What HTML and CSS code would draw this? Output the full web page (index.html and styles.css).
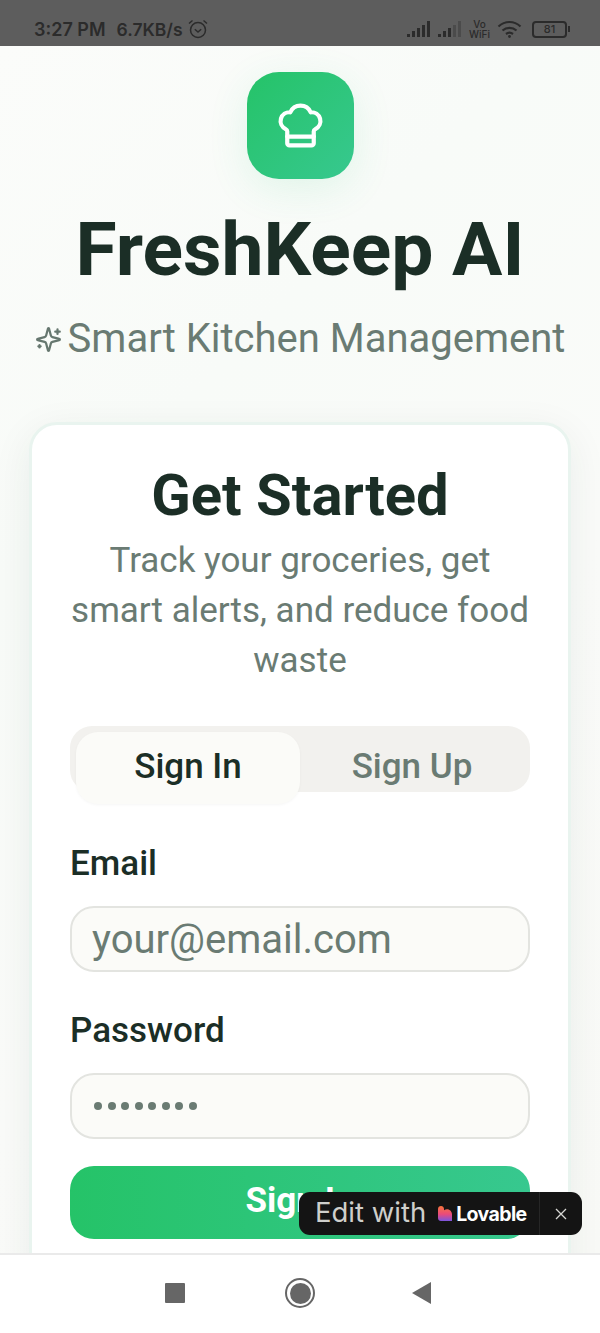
FILE: index.html
```html
<!DOCTYPE html>
<html lang="en">
<head>
	<meta charset="UTF-8">
	<title>FreshKeep AI</title>
	<link rel="stylesheet" href="styles.css">
</head>
<body>
	<div class="statusbar">
		<div class="status-left">
			<span>3:27 PM</span>
			<span class="speed">6.7KB/s</span>
			<svg class="alarm" width="20" height="20" viewBox="0 0 20 20" fill="none" stroke="#2b2b2b" stroke-width="1.5">
				<circle cx="10" cy="11" r="7.5"/>
				<path d="M6.8 10.2 10 13l3.2-2.8"/>
				<path d="M1 4.5 4.5 1.5M19 4.5l-3.5-3"/>
			</svg>
		</div>
		<div class="status-right">
			<svg width="24" height="18" viewBox="0 0 24 18" fill="#2b2b2b">
				<rect x="0" y="14" width="3" height="3"/><rect x="5" y="11" width="3" height="6"/><rect x="10" y="8" width="3" height="9"/><rect x="15" y="5" width="3" height="12"/><rect x="20" y="1" width="3" height="16"/>
			</svg>
			<svg width="24" height="18" viewBox="0 0 24 18" fill="#2b2b2b">
				<rect x="0" y="14" width="3" height="3"/><rect x="5" y="11" width="3" height="6"/><rect x="10" y="8" width="3" height="9"/><rect x="15" y="5" width="3" height="12" opacity=".35"/><rect x="20" y="1" width="3" height="16" opacity=".35"/>
			</svg>
			<div class="vowifi">Vo<br>WiFi</div>
			<svg width="25" height="19" viewBox="0 0 25 19" fill="none" stroke="#2b2b2b" stroke-width="2.2">
				<path d="M1.5 6.5c6.500-6 15.500-6 22 0"/>
				<path d="M5.500 10.500c4-3.500 10-3.500 14 0"/>
				<path d="M9 14c2-1.500 5-1.500 7 0"/>
				<circle cx="12.500" cy="16.500" r="1.400" fill="#2b2b2b" stroke="none"/>
			</svg>
			<div class="battery"><span class="battery-level">81</span></div>
			<div class="battery-tip"></div>
		</div>
	</div>

	<div class="page">
		<div class="hero">
			<div class="logo">
				<svg width="53" height="53" viewBox="0 0 24 24" fill="none" stroke="#fff" stroke-width="1.9" stroke-linecap="round" stroke-linejoin="round">
					<path d="M17 21a1 1 0 0 0 1-1v-5.350c0-.457.316-.844.727-1.041a4 4 0 0 0-2.134-7.589 5 5 0 0 0-9.186 0 4 4 0 0 0-2.134 7.588c.411.198.727.585.727 1.041V20a1 1 0 0 0 1 1Z"/>
					<path d="M6 17h12"/>
				</svg>
			</div>
			<h1 class="title">FreshKeep AI</h1>
			<div class="subtitle">
				<svg width="27" height="27" viewBox="0 0 24 24" fill="none" stroke="#66776f" stroke-width="2" stroke-linecap="round" stroke-linejoin="round">
					<path d="M9.900 15.500A2 2 0 0 0 8.500 14.100l-6.100-1.600a.5.5 0 0 1 0-1l6.100-1.600A2 2 0 0 0 9.900 8.500l1.600-6.100a.5.5 0 0 1 1 0l1.600 6.100a2 2 0 0 0 1.400 1.400l6.100 1.600a.5.5 0 0 1 0 1l-6.100 1.600a2 2 0 0 0-1.400 1.400l-1.600 6.100a.5.5 0 0 1-1 0Z"/>
					<path d="M20 3v4M22 5h-4M4 17v2M5 18H3"/>
				</svg>
				<span>Smart Kitchen Management</span>
			</div>
		</div>

		<div class="card">
			<h2 class="card-title">Get Started</h2>
			<p class="card-text">Track your groceries, get smart alerts, and reduce food waste</p>

			<div class="tabs">
				<div class="tab tab-active">Sign In</div>
				<div class="tab">Sign Up</div>
			</div>

			<label class="label" for="email">Email</label>
			<input class="field" id="email" type="text" placeholder="your@email.com">

			<label class="label" for="password">Password</label>
			<div class="field dots" id="password">
				<i></i><i></i><i></i><i></i><i></i><i></i><i></i><i></i>
			</div>

			<div class="submit">Sign In</div>
		</div>

		<div class="badge">
			<span class="badge-text">Edit with</span>
			<svg class="heart" width="16" height="17" viewBox="0 0 16 17">
				<defs>
					<linearGradient id="heartfill" x1="0" y1="0" x2="0" y2="1">
						<stop offset="0" stop-color="#f8743a"/>
						<stop offset=".55" stop-color="#ea4a7c"/>
						<stop offset="1" stop-color="#7a55e0"/>
					</linearGradient>
				</defs>
				<path d="M1 4C1 2.300 2.300 1 4 1s3 1.300 3 3v1.200C8 4.500 9 4.200 10 4.200c3 0 5 2.500 5 5.300V16H4c-1.700 0-3-1.300-3-3Z" fill="url(#heartfill)"/>
			</svg>
			<span class="badge-brand">Lovable</span>
			<span class="badge-close">
				<svg width="14" height="14" viewBox="0 0 14 14" stroke="#d8d8d4" stroke-width="1.300" fill="none"><path d="M2 2l10 10M12 2 2 12"/></svg>
			</span>
		</div>
	</div>

	<div class="navbar">
		<div class="nav-square"></div>
		<div class="nav-home"><div class="nav-home-dot"></div></div>
		<svg class="nav-back" width="20" height="22" viewBox="0 0 20 22" fill="#666"><path d="M0 11 19 0v22Z"/></svg>
	</div>
</body>
</html>
```

FILE: styles.css
```css
*{
	margin: 0;
	padding: 0;
	box-sizing: border-box;
}
html,body{
	height: 100%;
	overflow: hidden;
}
body{
	display: flex;
	flex-direction: column;
	width: 600px;
	height: 1333px;
	font-family: Roboto, "Liberation Sans", sans-serif;
	background-color: #fff;
}

/* status bar */
.statusbar{
	height: 46px;
	flex-shrink: 0;
	display: flex;
	justify-content: space-between;
	align-items: center;
	padding: 12px 30px 0 34px;
	background-color: #5d5d5d;
	color: #2b2b2b;
	font-family: Inter, "Liberation Sans", sans-serif;
	font-weight: 600;
	font-size: 18px;
}
.status-left{
	display: flex;
	align-items: center;
	gap: 11px;
}
.speed{
	font-size: 17.500px;
}
.alarm{
	margin-left: -6px;
}
.status-right{
	display: flex;
	align-items: center;
	gap: 7px;
}
.vowifi{
	font-size: 10px;
	line-height: 10px;
	font-weight: 500;
	text-align: center;
}
.battery{
	width: 35px;
	height: 17px;
	margin-left: 3px;
	border: 2px solid #2b2b2b;
	border-radius: 4px;
	display: flex;
	align-items: center;
	justify-content: center;
}
.battery-level{
	font-size: 11px;
	font-weight: 500;
	color: #2b2b2b;
}
.battery-tip{
	width: 2px;
	height: 6px;
	margin-left: -6px;
	background-color: #2b2b2b;
}

/* page */
.page{
	flex: 1;
	min-height: 0;
	overflow: hidden;
	position: relative;
	padding: 26px 29px 0;
	background: linear-gradient(135deg, #fbfcfa 0%, #f8fbf8 30%, #fafbf9 60%, #f9faf7 100%);
}
.hero{
	display: flex;
	flex-direction: column;
	align-items: center;
}
.logo{
	width: 107px;
	height: 107px;
	border-radius: 32px;
	display: flex;
	align-items: center;
	justify-content: center;
	background: linear-gradient(135deg, #25c368, #37c88f);
	box-shadow: 0 10px 40px rgba(46, 196, 120, .12);
}
.title{
	margin-top: 28px;
	font-size: 75px;
	line-height: 84px;
	font-weight: 700;
	color: #1b2e26;
}
.subtitle{
	margin-top: 24px;
	display: flex;
	align-items: center;
	gap: 6px;
	font-size: 40px;
	line-height: 48px;
	color: #6a7b73;
	white-space: nowrap;
}
.card{
	margin-top: 59px;
	height: 900px;
	padding: 38px 38px 0;
	background-color: #fff;
	border: 3px solid #e9f4ef;
	border-radius: 28px;
	box-shadow: 0 10px 40px rgba(30, 60, 45, .07);
}
.card-title{
	font-size: 58px;
	line-height: 64px;
	font-weight: 700;
	text-align: center;
	color: #1b2e26;
}
.card-text{
	margin-top: 9px;
	font-size: 35px;
	line-height: 50px;
	text-align: center;
	color: #6a7b73;
}

/* tabs */
.tabs{
	margin-top: 40px;
	height: 66px;
	display: flex;
	padding: 6px 0 0 6px;
	background-color: #f2f1ee;
	border-radius: 22px;
}
.tab{
	width: 224px;
	height: 72px;
	display: flex;
	align-items: center;
	justify-content: center;
	padding-bottom: 4px;
	font-size: 35px;
	font-weight: 500;
	color: #6a7b73;
}
.tab-active{
	background-color: #fbfbf8;
	border-radius: 22px;
	color: #1b2e26;
	box-shadow: 0 1px 3px rgba(0, 0, 0, .04);
}

/* form */
.label{
	display: block;
	margin-top: 49px;
	font-size: 35px;
	line-height: 46px;
	font-weight: 500;
	color: #1b2e26;
}
.label + .field{
	margin-top: 19px;
}
.field + .label{
	margin-top: 36px;
}
.field{
	display: block;
	width: 100%;
	height: 66px;
	padding: 0 20px;
	background-color: #fbfbf8;
	border: 2px solid #e3e4e0;
	border-radius: 24px;
	font-family: Roboto, "Liberation Sans", sans-serif;
	font-size: 40px;
	color: #6a7b73;
	outline: none;
}
.field::placeholder{
	color: #6a7b73;
	opacity: 1;
}
.dots{
	display: flex;
	align-items: center;
	gap: 5.500px;
	padding-left: 22px;
}
.dots i{
	width: 8px;
	height: 8px;
	border-radius: 50%;
	background-color: #6a7b73;
}
.submit{
	margin-top: 27px;
	height: 73px;
	display: flex;
	align-items: center;
	justify-content: center;
	padding-bottom: 4px;
	border-radius: 24px;
	background: linear-gradient(90deg, #25c368, #37c88f);
	color: #fff;
	font-size: 35px;
	font-weight: 700;
}

/* lovable badge */
.badge{
	position: absolute;
	left: 299px;
	top: 1146px;
	width: 283px;
	height: 43px;
	display: flex;
	align-items: center;
	padding: 0 0 3px 16px;
	background-color: #141414;
	border-radius: 11px;
	color: #fff;
}
.badge-text{
	font-family: Inter, "Liberation Sans", sans-serif;
	font-size: 27.500px;
	font-weight: 400;
	color: #cfcfcb;
	white-space: nowrap;
}
.heart{
	margin-left: 11px;
	margin-top: 3px;
}
.badge-brand{
	margin-left: 3px;
	margin-top: 3px;
	font-family: Inter, "Liberation Sans", sans-serif;
	font-size: 19.500px;
	font-weight: 700;
	letter-spacing: -.6px;
}
.badge-close{
	position: absolute;
	right: 0;
	top: 0;
	width: 43px;
	height: 43px;
	display: flex;
	align-items: center;
	justify-content: center;
	border-left: 1px solid #262626;
}

/* nav bar */
.navbar{
	height: 80px;
	flex-shrink: 0;
	display: flex;
	align-items: center;
	justify-content: center;
	gap: 100px;
	padding: 0 3px 2px 0;
	background-color: #fff;
	border-top: 2px solid #eaeaea;
}
.nav-square{
	width: 20px;
	height: 20px;
	border-radius: 1px;
	background-color: #666;
}
.nav-home{
	width: 30px;
	height: 30px;
	display: flex;
	align-items: center;
	justify-content: center;
	border: 2px solid #666;
	border-radius: 50%;
}
.nav-home-dot{
	width: 21px;
	height: 21px;
	border-radius: 50%;
	background-color: #666;
}
.nav-back{
	margin-left: -3px;
}
```
